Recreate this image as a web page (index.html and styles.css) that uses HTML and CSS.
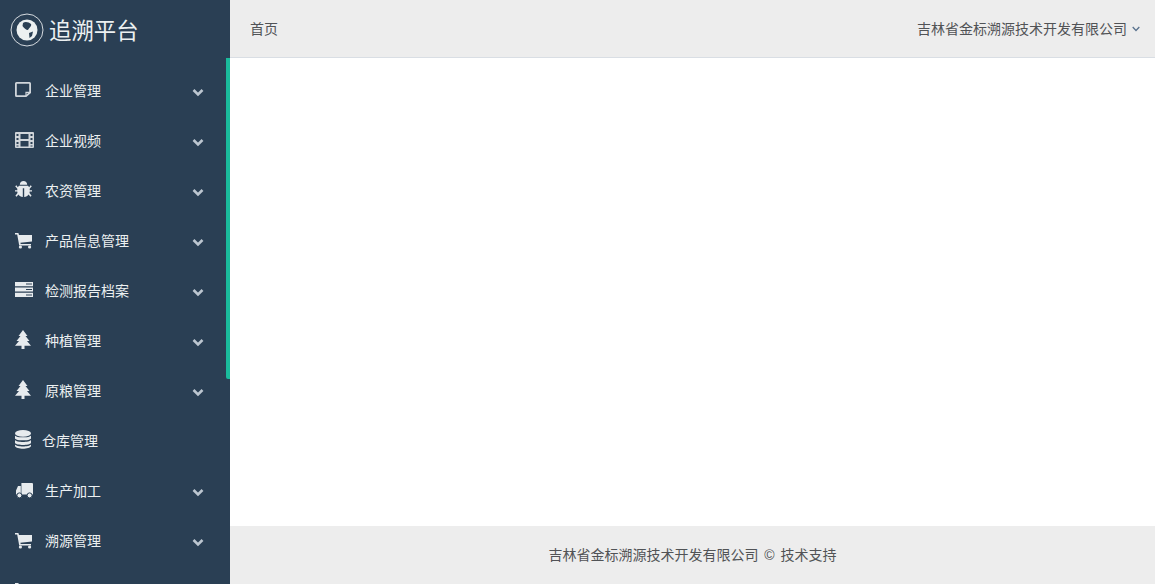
FILE: index.html
```html
<!DOCTYPE html>
<html lang="zh">
<head>
    <meta charset="UTF-8">
    <meta name="viewport" content="width=device-width, initial-scale=1.0">
    <title>追溯平台</title>
    <link rel="stylesheet" href="styles.css">
</head>
<body>
    <svg class="icon-defs" width="0" height="0">
        <defs>
            <symbol id="chev" viewBox="0 0 12 9"><path d="M1.5 2 L6 6.5 L10.5 2" fill="none" stroke="currentColor" stroke-width="2.6"/></symbol>
            <symbol id="note" viewBox="0 0 20 20"><path d="M1.5 2.9 H14.5 Q15.1 2.9 15.1 3.5 V12.5 L11 16.1 H1.5 Q.9 16.1 .9 15.5 V3.5 Q.9 2.9 1.5 2.9 Z" fill="none" stroke="#D0D5DA" stroke-width="1.8"/><path d="M11 16 V12.4 H15" fill="none" stroke="#D0D5DA" stroke-width="1.2"/></symbol>
            <symbol id="film" viewBox="0 0 20 20"><path fill-rule="evenodd" fill="#D0D5DA" d="M1 2 H18 Q19 2 19 3 V17 Q19 18 18 18 H1 Q0 18 0 17 V3 Q0 2 1 2 Z M1.5 4 V6 H3.5 V4 Z M1.5 8 V10 H3.5 V8 Z M1.5 12 V14 H3.5 V12 Z M1.5 15.5 V16.5 H3.5 V15.5 Z M15.5 4 V6 H17.5 V4 Z M15.5 8 V10 H17.5 V8 Z M15.5 12 V14 H17.5 V12 Z M15.5 15.5 V16.5 H17.5 V15.5 Z M5.5 4 V9 H13.5 V4 Z M5.5 11 V16.5 H13.5 V11 Z"/></symbol>
            <symbol id="bug" viewBox="0 0 20 20"><path fill="currentColor" d="M4.8 4.8 C4.8 2.7 6.4 1 8.5 1 C10.6 1 12.2 2.7 12.2 4.8 Z M4 5.8 H13 L14.2 7.2 L15.6 5.3 L16.8 6.2 L14.7 8.8 V10.2 H17 V11.5 H14.7 L14.5 13 L16.6 15.8 L15.4 16.8 L13.6 14.6 C12.6 16 11.1 17 9.2 17 V8.2 H7.8 V17 C5.9 17 4.4 16 3.4 14.6 L1.6 16.8 L.4 15.8 L2.5 13 L2.3 11.5 H0 V10.2 H2.3 V8.8 L.2 6.2 L1.4 5.3 L2.8 7.2 Z"/></symbol>
            <symbol id="cart" viewBox="0 0 20 20"><path fill="currentColor" d="M0 3 H3.4 L4 5 H17 V11.5 L5.4 12.7 L5.7 14 H16 V15.4 H4.2 L2.2 4.4 H0 Z"/><circle cx="5.4" cy="17" r="1.6" fill="currentColor"/><circle cx="14.6" cy="17" r="1.6" fill="currentColor"/></symbol>
            <symbol id="server" viewBox="0 0 20 20"><path fill-rule="evenodd" fill="currentColor" d="M0 2 H18 V6.2 H0 Z M11 3.6 V4.6 H17 V3.6 Z M0 7.4 H18 V11.6 H0 Z M11 9 V10 H17 V9 Z M0 12.8 H18 V17 H0 Z M11 14.4 V15.4 H17 V14.4 Z"/></symbol>
            <symbol id="tree" viewBox="0 0 20 20"><path fill="currentColor" d="M8 0 L12.5 6 H10.5 L14.5 11 H12 L16 15.8 H9.5 V19 H6.5 V15.8 H0 L4 11 H1.5 L5.5 6 H3.5 Z"/></symbol>
            <symbol id="db" viewBox="0 0 20 20"><ellipse cx="8" cy="3.4" rx="8" ry="3.4" fill="currentColor"/><path fill="currentColor" d="M0 5.4 C1.5 8 14.5 8 16 5.4 V8.4 C14.5 11 1.5 11 0 8.4 Z M0 10 C1.5 12.6 14.5 12.6 16 10 V13 C14.5 15.6 1.5 15.6 0 13 Z M0 14.6 C1.5 17.2 14.5 17.2 16 14.6 V16 C14.5 19.6 1.5 19.6 0 16 Z"/></symbol>
            <symbol id="truck" viewBox="0 0 20 20"><path fill="currentColor" d="M6.4 3 H17 Q18 3 18 4 V14.5 H6.4 Z M5.8 6 V14.5 H1 V10.5 L3 6 Z"/><circle cx="4.4" cy="15.4" r="2.5" fill="currentColor" stroke="#2A3F54" stroke-width="1"/><circle cx="14.6" cy="15.4" r="2.5" fill="currentColor" stroke="#2A3F54" stroke-width="1"/></symbol>
        </defs>
    </svg>
    <div class="app">
        <aside class="sidebar">
            <div class="brand">
                <span class="brand-logo">
                    <svg viewBox="0 0 34 34" width="34" height="34">
                        <circle cx="17" cy="17" r="16" fill="none" stroke="#D5DADF" stroke-width="1"/>
                        <circle cx="17" cy="17" r="10.5" fill="#ECF0F1"/>
                        <path d="M13 10 C15 8 19 9 21 11 C22 13 19 15 18 17 C16 17 14 15 12.5 13 Z M19 20 L23 18.5 L22 23 L19.5 25 Z" fill="#2A3F54"/>
                    </svg>
                </span>
                <span class="brand-name">追溯平台</span>
            </div>
            <ul class="nav">
                <li class="nav-item"><svg class="nav-icon"><use href="#note"/></svg><span class="nav-label">企业管理</span><svg class="chev"><use href="#chev"/></svg></li>
                <li class="nav-item"><svg class="nav-icon"><use href="#film"/></svg><span class="nav-label">企业视频</span><svg class="chev"><use href="#chev"/></svg></li>
                <li class="nav-item"><svg class="nav-icon"><use href="#bug"/></svg><span class="nav-label">农资管理</span><svg class="chev"><use href="#chev"/></svg></li>
                <li class="nav-item"><svg class="nav-icon"><use href="#cart"/></svg><span class="nav-label">产品信息管理</span><svg class="chev"><use href="#chev"/></svg></li>
                <li class="nav-item"><svg class="nav-icon"><use href="#server"/></svg><span class="nav-label">检测报告档案</span><svg class="chev"><use href="#chev"/></svg></li>
                <li class="nav-item"><svg class="nav-icon"><use href="#tree"/></svg><span class="nav-label">种植管理</span><svg class="chev"><use href="#chev"/></svg></li>
                <li class="nav-item"><svg class="nav-icon"><use href="#tree"/></svg><span class="nav-label">原粮管理</span><svg class="chev"><use href="#chev"/></svg></li>
                <li class="nav-item tight"><svg class="nav-icon"><use href="#db"/></svg><span class="nav-label">仓库管理</span></li>
                <li class="nav-item"><svg class="nav-icon"><use href="#truck"/></svg><span class="nav-label">生产加工</span><svg class="chev"><use href="#chev"/></svg></li>
                <li class="nav-item"><svg class="nav-icon"><use href="#cart"/></svg><span class="nav-label">溯源管理</span><svg class="chev"><use href="#chev"/></svg></li>
                <li class="nav-item"><svg class="nav-icon"><use href="#cart"/></svg></li>
            </ul>
            <div class="scroll-thumb"></div>
        </aside>
        <main class="main">
            <header class="topbar">
                <span class="crumb">首页</span>
                <span class="user">吉林省金标溯源技术开发有限公司
                    <svg class="user-caret" viewBox="0 0 8 6" width="8" height="6"><path d="M.7 1 L4 4.5 L7.3 1" fill="none" stroke="currentColor" stroke-width="1.3"/></svg>
                </span>
            </header>
            <div class="content"></div>
            <footer class="footer">吉林省金标溯源技术开发有限公司 © 技术支持</footer>
        </main>
    </div>
</body>
</html>
```
FILE: styles.css
```css
html, body {
    height: 100%;
    margin: 0;
    overflow: hidden;
}

body {
    font-family: "Liberation Sans", "Noto Sans CJK SC", sans-serif;
    font-size: 14px;
    color: #515356;
    background: #fff;
}

.icon-defs {
    position: absolute;
}

.app {
    display: flex;
    height: 100%;
}

.sidebar {
    position: relative;
    flex: 0 0 230px;
    height: 100%;
    overflow: hidden;
    background: #2A3F54;
    color: #ECF0F1;
}

.brand {
    display: flex;
    align-items: center;
    gap: 5px;
    height: 60px;
    padding-left: 10px;
}

.brand-logo {
    display: flex;
}

.brand-name {
    margin-top: -2px;
    font-size: 22.4px;
    color: #ECF0F1;
}

.nav {
    list-style: none;
    margin: 6px 0 0;
    padding: 0;
}

.nav-item {
    display: flex;
    align-items: center;
    height: 50px;
    padding-left: 15px;
    box-sizing: border-box;
}

.nav-icon {
    flex: 0 0 20px;
    width: 20px;
    height: 20px;
    margin-top: -2px;
    margin-right: 10px;
    color: #E7EBEE;
}

.nav-item.tight .nav-icon {
    margin-right: 7px;
}

.nav-label {
    flex: 1;
    font-size: 14px;
    line-height: 20px;
    color: #ECF0F1;
}

.chev {
    width: 12px;
    height: 9px;
    margin-right: 26px;
    margin-top: 3px;
    color: #BCC6D0;
}

.scroll-thumb {
    position: absolute;
    top: 58px;
    right: 0;
    width: 4px;
    height: 321px;
    background: #1ABB9C;
    border-radius: 0 0 0 2px;
}

.main {
    flex: 1;
    display: flex;
    flex-direction: column;
    min-width: 0;
}

.topbar {
    display: flex;
    align-items: center;
    justify-content: space-between;
    height: 55px;
    padding: 0 15px 2px 20px;
    background: #EDEDED;
    border-bottom: 1px solid #D9DEE4;
}

.user-caret {
    margin-left: 1px;
    vertical-align: 2px;
    color: #5A738E;
}

.content {
    flex: 1;
    background: #fff;
}

.footer {
    display: flex;
    align-items: center;
    justify-content: center;
    height: 56px;
    padding-bottom: 2px;
    word-spacing: 2px;
    background: #EDEDED;
}
```
